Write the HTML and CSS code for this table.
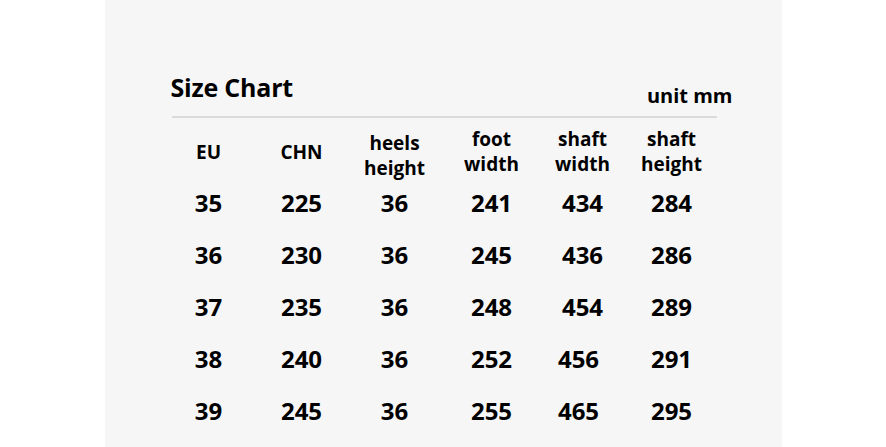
FILE: index.html
```html
<!DOCTYPE html>
<html lang="en">
<head>
<meta charset="utf-8">
<title>Size Chart</title>
<link rel="stylesheet" href="styles.css">
</head>
<body>
<div class="panel">
  <div class="chart">
    <div class="title-row">
      <h1 class="title">Size Chart</h1>
      <span class="unit">unit mm</span>
    </div>
    <div class="rule"></div>
    <div class="grid head">
      <div class="cell single">EU</div>
      <div class="cell single">CHN</div>
      <div class="cell heels">heels<br>height</div>
      <div class="cell">foot<br>width</div>
      <div class="cell">shaft<br>width</div>
      <div class="cell">shaft<br>height</div>
    </div>
    <div class="grid row"><div class="cell">35</div><div class="cell">225</div><div class="cell">36</div><div class="cell">241</div><div class="cell">434</div><div class="cell">284</div></div>
    <div class="grid row"><div class="cell">36</div><div class="cell">230</div><div class="cell">36</div><div class="cell">245</div><div class="cell">436</div><div class="cell">286</div></div>
    <div class="grid row"><div class="cell">37</div><div class="cell">235</div><div class="cell">36</div><div class="cell">248</div><div class="cell">454</div><div class="cell">289</div></div>
    <div class="grid row"><div class="cell">38</div><div class="cell">240</div><div class="cell">36</div><div class="cell">252</div><div class="cell shift">456</div><div class="cell">291</div></div>
    <div class="grid row"><div class="cell">39</div><div class="cell">245</div><div class="cell">36</div><div class="cell">255</div><div class="cell shift">465</div><div class="cell">295</div></div>
  </div>
</div>
</body>
</html>
```

FILE: styles.css
```css
html, body {
  margin: 0;
  padding: 0;
  background: #ffffff;
}
body {
  font-family: "Open Sans", "DejaVu Sans", sans-serif;
  color: #000000;
  font-weight: 700;
}
.panel {
  width: 677px;
  height: 447px;
  margin: 0 auto;
  background: #f6f6f6;
  padding-top: 72px;
  box-sizing: border-box;
  overflow: hidden;
}
.chart {
  margin-left: 66px;
  width: 562px;
}
.title-row {
  display: flex;
  justify-content: space-between;
  align-items: flex-start;
  height: 36px;
}
.title {
  margin: 0;
  font-size: 25px;
  line-height: 30px;
  font-weight: 700;
  letter-spacing: -0.2px;
}
.unit {
  margin-top: 12px;
  font-size: 20px;
  line-height: 24px;
}
.rule {
  width: 545px;
  height: 2px;
  margin-top: 8px;
  margin-left: 1px;
  background: #dadada;
}
.grid {
  display: grid;
  grid-template-columns: 92px 94px 92px 102px 80px 98px;
  margin-left: -8px;
  text-align: center;
  align-items: center;
}
.head {
  margin-top: 9px;
  height: 50px;
  font-size: 19px;
  line-height: 25px;
  align-items: start;
}
.head .single {
  margin-top: 13px;
}
.head .heels {
  margin-top: 4px;
}
.row {
  font-size: 24px;
  line-height: 52px;
}
.row .shift {
  padding-right: 8px;
}
```
